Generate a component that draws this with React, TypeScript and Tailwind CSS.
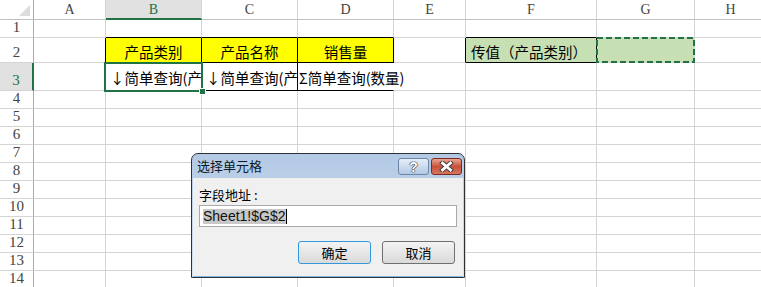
import React from 'react';

const W = {
  A: 'w-[72px]',
  B: 'w-[96px]',
  C: 'w-[96px]',
  D: 'w-[96px]',
  E: 'w-[72px]',
  F: 'w-[131px]',
  G: 'w-[98px]',
  H: 'w-[72px]',
};

const cjk = "font-['Noto_Sans_CJK_SC',sans-serif]";
const hdr = "font-['Liberation_Serif','Noto_Sans_CJK_SC',serif]";

interface CellProps {
  w: string;
  r?: string;
  b?: string;
  className?: string;
  children?: React.ReactNode;
}

function Cell({ w, r = 'border-r-[#d4d4d4]', b = 'border-b-[#d4d4d4]', className = '', children }: CellProps) {
  return (
    <div className={`relative shrink-0 h-full border-r border-b ${r} ${b} ${w} ${className}`}>{children}</div>
  );
}

function Row({ h, n, active = false, children }: { h: string; n: number; active?: boolean; children?: React.ReactNode }) {
  return (
    <div className={`flex ${h}`}>
      <div
        className={`shrink-0 w-[34px] h-full flex items-end justify-center pb-[1px] border-b border-b-[#d4d4d4] ${hdr} text-[15px] leading-[17px] ${
          active
            ? 'bg-[#e1e1e1] text-[#217346] border-r-2 border-r-[#217346]'
            : 'bg-white text-[#444] border-r border-r-[#ababab]'
        }`}
      >
        {n}
      </div>
      {children}
    </div>
  );
}

function PlainRow({ n }: { n: number }) {
  return (
    <Row h="h-[18px]" n={n}>
      <Cell w={W.A} />
      <Cell w={W.B} />
      <Cell w={W.C} />
      <Cell w={W.D} />
      <Cell w={W.E} />
      <Cell w={W.F} />
      <Cell w={W.G} />
      <Cell w={W.H} />
    </Row>
  );
}

const txt = `flex items-end whitespace-nowrap text-[14.5px] leading-[20px] text-black ${cjk}`;

function ColHead() {
  const cols: [string, string][] = [
    ['A', W.A], ['B', W.B], ['C', W.C], ['D', W.D], ['E', W.E], ['F', W.F], ['G', W.G], ['H', W.H],
  ];
  return (
    <div className="flex h-[20px]">
      <div className="relative shrink-0 w-[34px] h-full bg-white border-r border-b border-r-[#ababab] border-b-[#c0c0c0]">
        <svg className="absolute left-[19px] top-[5px]" width="11" height="11" viewBox="0 0 11 11">
          <polygon points="11,0 11,11 0,11" fill="#dcdcdc" />
        </svg>
      </div>
      {cols.map(([k, w]) => (
        <div
          key={k}
          className={`shrink-0 h-full ${w} flex items-center justify-center border-r border-r-[#d4d4d4] ${hdr} text-[14px] ${
            k === 'B'
              ? 'bg-[#e1e1e1] text-[#217346] border-b-2 border-b-[#217346]'
              : 'bg-white text-[#444] border-b border-b-[#c0c0c0]'
          }`}
        >
          {k}
        </div>
      ))}
    </div>
  );
}

function Dialog() {
  return (
    <div className="absolute left-[191px] top-[153px] w-[274px] h-[125px] rounded-t-[7px] border border-[#2e3338] bg-gradient-to-b from-[#b3c9e4] to-[#d6e3f2] flex flex-col">
      {/* title bar */}
      <div className="h-[24px] flex items-start justify-between pl-[5px] pr-[2px]">
        <span className={`mt-[3px] text-[13px] leading-[18px] text-[#0c1a2a] ${cjk}`}>选择单元格</span>
        <div className="flex gap-[2px] mt-[4px]">
          <div className="w-[31px] h-[17px] rounded-[3px] border border-[#6c85a6] bg-gradient-to-b from-[#e6eef8] to-[#b4c9e3] flex items-center justify-center">
            <span className="text-[14px] leading-[14px] font-bold text-white [text-shadow:0_0_1px_#222,0_0_1px_#222,0_0_1px_#222] font-['Liberation_Sans',sans-serif]">?</span>
          </div>
          <div className="w-[31px] h-[17px] rounded-[3px] border border-[#7d2b20] bg-gradient-to-b from-[#e7a594] via-[#c8503b] to-[#d4765f] flex items-center justify-center">
            <svg width="15" height="11" viewBox="0 0 15 11">
              <path d="M3.5 2 L11.5 9 M11.5 2 L3.5 9" stroke="#3a3a3a" strokeWidth="4.6" strokeLinecap="square" />
              <path d="M3.5 2 L11.5 9 M11.5 2 L3.5 9" stroke="#ffffff" strokeWidth="2.8" strokeLinecap="square" />
            </svg>
          </div>
        </div>
      </div>
      {/* body */}
      <div className="flex-1 mx-[1px] bg-[#f0f0f0] border-b border-b-[#86b6e2] flex flex-col pl-[6px] pr-[7px]">
        <span className={`mt-[9px] h-[16px] text-[13px] leading-[16px] text-black ${cjk}`}>字段地址 :</span>
        <div className="mt-[2px] h-[22px] w-[258px] bg-white border border-[#a9a9a9] flex items-center pl-[3px]">
          <span className="bg-[#c8c8c8] text-[#111] text-[14px] leading-[15px] font-['Liberation_Sans',sans-serif]">Sheet1!$G$2</span>
          <span className="w-px h-[15px] bg-black" />
        </div>
        <div className="mt-[14px] flex justify-end gap-[11px] pr-[1px]">
          <div className={`w-[73px] h-[23px] rounded-[3px] border border-[#3399dd] bg-gradient-to-b from-[#f3f3f3] to-[#dadada] flex items-center justify-center text-[13px] text-black ${cjk}`}>
            确定
          </div>
          <div className={`w-[73px] h-[23px] rounded-[3px] border border-[#707070] bg-gradient-to-b from-[#f3f3f3] to-[#dadada] flex items-center justify-center text-[13px] text-black ${cjk}`}>
            取消
          </div>
        </div>
      </div>
    </div>
  );
}

export default function App() {
  const rest = [4, 5, 6, 7, 8, 9, 10, 11, 12, 13, 14];
  return (
    <div className="relative w-[761px] h-[287px] overflow-hidden bg-white">
      <ColHead />

      <Row h="h-[18px]" n={1}>
        <Cell w={W.A} />
        <Cell w={W.B} b="border-b-black" />
        <Cell w={W.C} b="border-b-black" />
        <Cell w={W.D} b="border-b-black" />
        <Cell w={W.E} />
        <Cell w={W.F} b="border-b-black" />
        <Cell w={W.G} />
        <Cell w={W.H} />
      </Row>

      <Row h="h-[25px]" n={2}>
        <Cell w={W.A} r="border-r-black" />
        <Cell w={W.B} r="border-r-black" b="border-b-black" className={`bg-[#ffff00] justify-center ${txt}`}>
          产品类别
        </Cell>
        <Cell w={W.C} r="border-r-black" b="border-b-black" className={`bg-[#ffff00] justify-center ${txt}`}>
          产品名称
        </Cell>
        <Cell w={W.D} r="border-r-black" b="border-b-black" className={`bg-[#ffff00] justify-center ${txt}`}>
          销售量
        </Cell>
        <Cell w={W.E} r="border-r-black" />
        <Cell w={W.F} r="border-r-black" b="border-b-black" className={`bg-[#c6e0b4] pl-[5px] ${txt}`}>
          传值（产品类别）
        </Cell>
        <Cell w={W.G} className="bg-[#c6e0b4]">
          <svg className="absolute -left-[1px] -top-[1px] z-10" width="99" height="26" viewBox="0 0 99 26">
            <rect x="1" y="1" width="97" height="24" fill="none" stroke="#217346" strokeWidth="2" strokeDasharray="6 3" />
          </svg>
        </Cell>
        <Cell w={W.H} />
      </Row>

      <Row h="h-[28px]" n={3} active>
        <Cell w={W.A} />
        <Cell w={W.B} r="border-r-black" b="border-b-black" className={`pl-[4px] pb-[2px] ${txt}`}>
          <span className="block overflow-hidden w-full">↓简单查询(产品类别)</span>
          <div className="absolute -left-[2px] -top-[1px] w-[99px] h-[30px] border-2 border-[#217346] z-10">
            <div className="absolute left-[93px] top-[24px] w-[7px] h-[7px] bg-[#217346] border border-white" />
          </div>
        </Cell>
        <Cell w={W.C} r="border-r-black" b="border-b-black" className={`pl-[4px] pb-[2px] ${txt}`}>
          <span className="block overflow-hidden w-full">↓简单查询(产品名称)</span>
        </Cell>
        <Cell w={W.D} r="border-r-white" b="border-b-black" className={`z-[5] pl-[1px] pb-[2px] ${txt}`}>
          Σ简单查询(数量)
        </Cell>
        <Cell w={W.E} />
        <Cell w={W.F} />
        <Cell w={W.G} />
        <Cell w={W.H} />
      </Row>

      {rest.map((n) => (
        <PlainRow key={n} n={n} />
      ))}

      <Dialog />
    </div>
  );
}
